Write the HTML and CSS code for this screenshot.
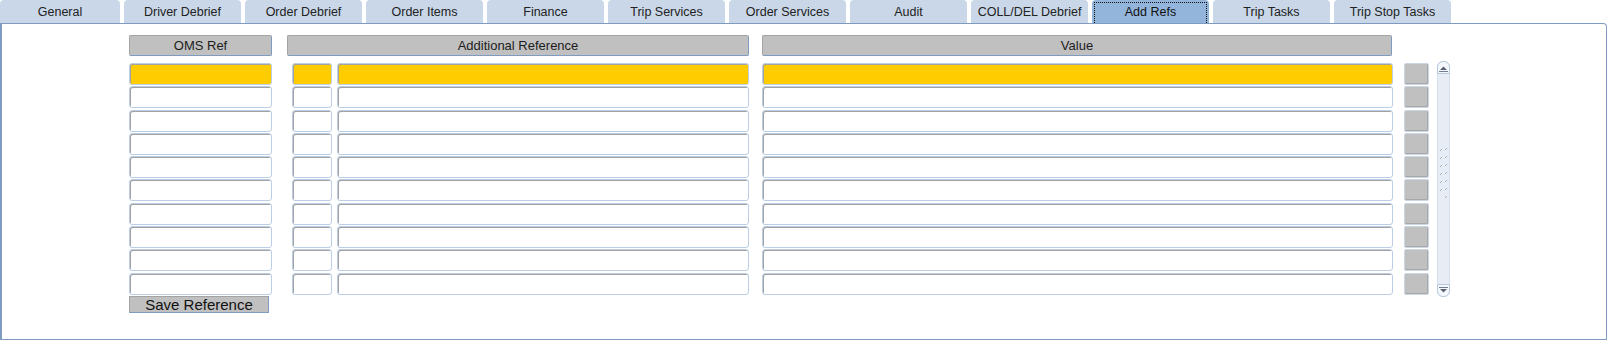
FILE: index.html
```html
<!DOCTYPE html>
<html lang="en">
  <head>
    <meta charset="UTF-8" />
    <title>Add Refs</title>
    <link rel="stylesheet" href="styles.css">
  </head>
  <body>
    <div class="tabs">
      <div class="tab first">General</div>
      <div class="tab">Driver Debrief</div>
      <div class="tab">Order Debrief</div>
      <div class="tab">Order Items</div>
      <div class="tab">Finance</div>
      <div class="tab">Trip Services</div>
      <div class="tab">Order Services</div>
      <div class="tab">Audit</div>
      <div class="tab">COLL/DEL Debrief</div>
      <div class="tab active"><span>Add Refs</span></div>
      <div class="tab">Trip Tasks</div>
      <div class="tab">Trip Stop Tasks</div>
    </div>
    <div class="panel">
      <div class="head-row">
        <div class="head oms">OMS Ref</div>
        <div class="head addl">Additional Reference</div>
        <div class="head value">Value</div>
      </div>
      <div class="grid-area">
        <div class="rows">
          <div class="row current">
            <div class="field oms"></div>
            <div class="field seq"></div>
            <div class="field addl"></div>
            <div class="field value"></div>
            <div class="pick"></div>
          </div>
          <div class="row"><div class="field oms"></div><div class="field seq"></div><div class="field addl"></div><div class="field value"></div><div class="pick"></div></div>
          <div class="row"><div class="field oms"></div><div class="field seq"></div><div class="field addl"></div><div class="field value"></div><div class="pick"></div></div>
          <div class="row"><div class="field oms"></div><div class="field seq"></div><div class="field addl"></div><div class="field value"></div><div class="pick"></div></div>
          <div class="row"><div class="field oms"></div><div class="field seq"></div><div class="field addl"></div><div class="field value"></div><div class="pick"></div></div>
          <div class="row"><div class="field oms"></div><div class="field seq"></div><div class="field addl"></div><div class="field value"></div><div class="pick"></div></div>
          <div class="row"><div class="field oms"></div><div class="field seq"></div><div class="field addl"></div><div class="field value"></div><div class="pick"></div></div>
          <div class="row"><div class="field oms"></div><div class="field seq"></div><div class="field addl"></div><div class="field value"></div><div class="pick"></div></div>
          <div class="row"><div class="field oms"></div><div class="field seq"></div><div class="field addl"></div><div class="field value"></div><div class="pick"></div></div>
          <div class="row"><div class="field oms"></div><div class="field seq"></div><div class="field addl"></div><div class="field value"></div><div class="pick"></div></div>
          <button class="save">Save Reference</button>
        </div>
        <div class="scrollbar">
          <div class="arrow up">
            <svg width="11" height="8" viewBox="0 0 11 8"><path d="M2 5 L5.5 1.5 L9 5 Z" fill="#5b6273"/><rect x="1" y="6" width="9" height="1" fill="#6f7d93"/></svg>
          </div>
          <div class="track">
            <svg class="grip" width="9" height="52" viewBox="0 0 9 52">
              <g fill="#9fb3cc">
                <rect x="1" y="2" width="1" height="1"/><rect x="2" y="1" width="1" height="1"/>
                <rect x="6" y="1" width="1" height="1"/><rect x="7" y="0" width="1" height="1"/>
                <rect x="1" y="10" width="1" height="1"/><rect x="2" y="9" width="1" height="1"/>
                <rect x="6" y="9" width="1" height="1"/><rect x="7" y="8" width="1" height="1"/>
                <rect x="1" y="18" width="1" height="1"/><rect x="2" y="17" width="1" height="1"/>
                <rect x="6" y="17" width="1" height="1"/><rect x="7" y="16" width="1" height="1"/>
                <rect x="1" y="26" width="1" height="1"/><rect x="2" y="25" width="1" height="1"/>
                <rect x="6" y="25" width="1" height="1"/><rect x="7" y="24" width="1" height="1"/>
                <rect x="1" y="34" width="1" height="1"/><rect x="2" y="33" width="1" height="1"/>
                <rect x="6" y="33" width="1" height="1"/><rect x="7" y="32" width="1" height="1"/>
                <rect x="1" y="42" width="1" height="1"/><rect x="2" y="41" width="1" height="1"/>
                <rect x="6" y="41" width="1" height="1"/><rect x="7" y="40" width="1" height="1"/>
                <rect x="6" y="49" width="1" height="1"/><rect x="7" y="48" width="1" height="1"/>
              </g>
            </svg>
          </div>
          <div class="arrow down">
            <svg width="11" height="8" viewBox="0 0 11 8"><rect x="1" y="1" width="9" height="1" fill="#6f7d93"/><path d="M2 3 L9 3 L5.5 6.5 Z" fill="#5b6273"/></svg>
          </div>
        </div>
      </div>
    </div>
  </body>
</html>
```
FILE: styles.css
```css
body {
  margin: 0;
  width: 1609px;
  height: 344px;
  background: #fff;
  font-family: "Liberation Sans", Arial, sans-serif;
  color: #1c1c1c;
  overflow: hidden;
}
.tabs {
  display: flex;
  gap: 4px;
  height: 23px;
}
.tab {
  width: 117px;
  height: 23px;
  box-sizing: border-box;
  background: #c9d7e9;
  border-radius: 4px 4px 0 0;
  font-size: 12.5px;
  text-align: center;
  padding-top: 4px;
  line-height: 17px;
  color: #222;
}
.tab.first {
  width: 120px;
}
.tab.active {
  background: #93b5dc;
  padding: 2px 2px 0;
}
.tab.active span {
  display: block;
  height: 21px;
  line-height: 19px;
  border: 1px dotted #111;
  border-bottom: none;
  box-sizing: border-box;
  color: #111;
}
.panel {
  width: 1607px;
  height: 317px;
  box-sizing: border-box;
  border: 1px solid #7f9cc0;
  border-left: 2px solid #7f9cc0;
  border-radius: 0 4px 0 0;
  padding: 11px 0 0 127px;
}
.head-row {
  display: flex;
  height: 21px;
}
.head {
  box-sizing: border-box;
  height: 21px;
  background: #c0c0c0;
  border: 1px solid #a3a3a3;
  border-right-color: #7f9cc0;
  border-bottom-color: #7f9cc0;
  border-radius: 2px;
  font-size: 13px;
  line-height: 19px;
  text-align: center;
}
.head.oms {
  width: 143px;
  margin-right: 15px;
}
.head.addl {
  width: 462px;
  margin-right: 13px;
}
.head.value {
  width: 630px;
}
.grid-area {
  display: flex;
  margin-top: 7px;
}
.row {
  display: flex;
  height: 22px;
  margin-bottom: 1.3px;
}
.field {
  box-sizing: border-box;
  height: 22px;
  background: #fff;
  border: 1px solid #bccee5;
  border-radius: 3px;
  box-shadow: inset 1px 1px 0 #a2a2a2;
}
.row.current .field {
  background: #ffcc00;
}
.field.oms {
  width: 143px;
  margin-right: 20px;
}
.field.seq {
  width: 40px;
  margin-right: 5px;
}
.field.addl {
  width: 412px;
  margin-right: 13px;
}
.field.value {
  width: 631px;
  margin-right: 11px;
}
.pick {
  box-sizing: border-box;
  width: 25px;
  height: 22px;
  background: #c0c0c0;
  border: 1px solid #ccd7e6;
  border-radius: 2px;
  box-shadow: inset -1px -1px 0 #a8a8a8;
}
.save {
  display: block;
  margin: 0;
  width: 140px;
  height: 17px;
  padding: 0;
  box-sizing: border-box;
  background: #c0c0c0;
  border: 1px solid #a3a3a3;
  border-right-color: #7f9cc0;
  border-bottom-color: #7f9cc0;
  font-family: "Liberation Sans", Arial, sans-serif;
  font-size: 15px;
  line-height: 15px;
  color: #111;
}
.scrollbar {
  display: flex;
  flex-direction: column;
  width: 13px;
  height: 236px;
  margin: -2px 0 0 8px;
  box-sizing: border-box;
  background: #e8edf5;
  border: 1px solid #d6e0ec;
  border-radius: 6px;
}
.arrow {
  height: 13px;
  box-sizing: border-box;
  background: #f4f7fb;
  border: 1px solid #b7c8de;
  margin: -1px;
  display: flex;
  justify-content: center;
  align-items: center;
}
.arrow.up {
  border-radius: 6px 6px 0 0;
  padding-top: 2px;
}
.arrow.down {
  border-radius: 0 0 6px 6px;
  padding-bottom: 2px;
}
.track {
  flex: 1;
  display: flex;
  justify-content: center;
  align-items: center;
  padding-bottom: 10px;
}
```
